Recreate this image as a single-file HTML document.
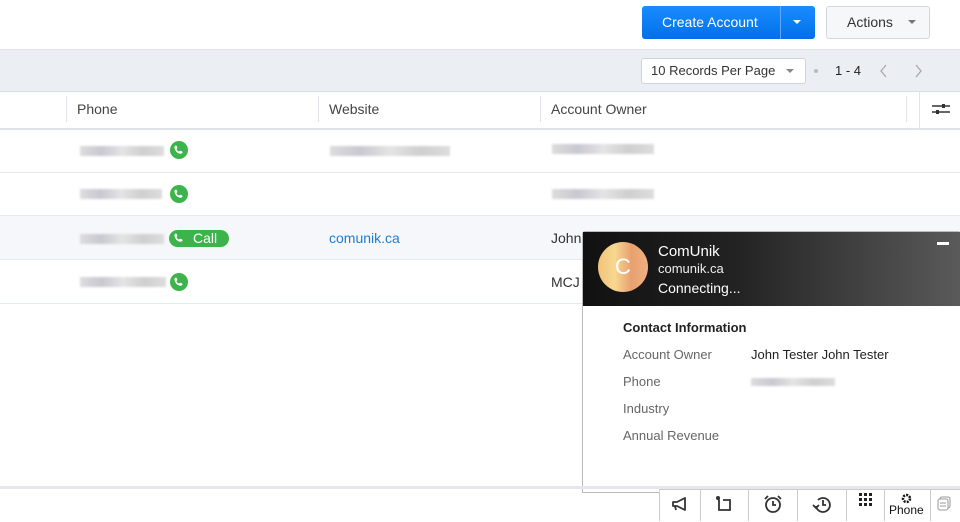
<!DOCTYPE html><html><head><style>
body{margin:0;width:960px;height:521px;overflow:hidden;background:#fff;font-family:"Liberation Sans",sans-serif;font-size:14px;color:#333;position:relative}
.a{position:absolute}
.blur{position:absolute;height:10px;background:linear-gradient(90deg,#ddd,#c8c8d0,#e4e4e4,#cfcfcf,#ddd);filter:blur(1px)}
.ph{position:absolute;width:18px;height:18px;border-radius:9px;background:#3cb44b}
.row{position:absolute;left:0;width:960px;border-bottom:1px solid #e6e9ee;height:43px}
.lbl{position:absolute;left:623px;color:#666}
.ic{position:absolute;top:494px}
</style></head><body>
<svg width="0" height="0" style="position:absolute"><defs><symbol id="p" viewBox="0 0 18 18"><path d="M6 4.5c.6 0 1.4 2 1.4 2.4 0 .5-.9.9-.8 1.3.3 1 1.3 2 2.3 2.3.4.1.8-.8 1.3-.8.4 0 2.4.8 2.4 1.4 0 .9-1 1.7-1.9 1.7C7.7 12.8 4.9 9.9 4.4 6.5c0-.9.7-2 1.6-2z" fill="#fff"/></symbol></defs></svg>
<div class="a" style="left:642px;top:6px;width:173px;height:33px;border-radius:3px;background:linear-gradient(#1a8cff,#0070e8)"></div>
<div class="a" style="left:662px;top:14px;color:#fff;font-size:14px">Create Account</div>
<div class="a" style="left:780px;top:6px;width:1px;height:33px;background:#5aa8ff"></div>
<div class="a" style="left:793px;top:20px;border:4px solid transparent;border-top-color:#fff"></div>
<div class="a" style="left:826px;top:6px;width:102px;height:31px;border:1px solid #d3d7de;border-radius:3px;background:#f6f7f9"></div>
<div class="a" style="left:847px;top:14px;color:#333">Actions</div>
<div class="a" style="left:908px;top:20px;border:4px solid transparent;border-top-color:#777"></div>
<div class="a" style="left:0;top:49px;width:960px;height:41px;background:#ebeef2;border-top:1px solid #e2e5ea;border-bottom:1px solid #d9dee6"></div>
<div class="a" style="left:641px;top:58px;width:163px;height:24px;border:1px solid #cfd4db;border-radius:3px;background:#fff"></div>
<div class="a" style="left:651px;top:63px;font-size:13px">10 Records Per Page</div>
<div class="a" style="left:786px;top:69px;border:4px solid transparent;border-top-color:#888"></div>
<div class="a" style="left:814px;top:69px;width:4px;height:4px;border-radius:2px;background:#bbb"></div>
<div class="a" style="left:835px;top:63px;font-size:13px;color:#222">1 - 4</div>
<svg class="a" style="left:879px;top:63px" width="10" height="16"><path d="M7 2L2 8l5 6" stroke="#aaa" fill="none" stroke-width="1.3"/></svg>
<svg class="a" style="left:913px;top:63px" width="10" height="16"><path d="M3 2l5 6-5 6" stroke="#aaa" fill="none" stroke-width="1.3"/></svg>
<div class="a" style="left:0;top:128px;width:960px;height:2px;background:#dfe3e8"></div>
<div class="a" style="left:66px;top:96px;width:1px;height:26px;background:#e0e3e8"></div>
<div class="a" style="left:318px;top:96px;width:1px;height:26px;background:#e0e3e8"></div>
<div class="a" style="left:540px;top:96px;width:1px;height:26px;background:#e0e3e8"></div>
<div class="a" style="left:906px;top:96px;width:1px;height:26px;background:#e0e3e8"></div>
<div class="a" style="left:919px;top:91px;width:1px;height:38px;background:#e0e3e8"></div>
<div class="a" style="left:77px;top:101px;color:#444">Phone</div>
<div class="a" style="left:329px;top:101px;color:#444">Website</div>
<div class="a" style="left:551px;top:101px;color:#444">Account Owner</div>
<svg class="a" style="left:930px;top:101px" width="22" height="16"><path d="M2 5h18M2 11h18" stroke="#333" stroke-width="1.5"/><rect x="12" y="3" width="3" height="4" fill="#333"/><rect x="6" y="9" width="3" height="4" fill="#333"/></svg>
<div class="row" style="top:129px"></div>
<div class="row" style="top:172px"></div>
<div class="row" style="top:216px;background:#f5f7fa"></div>
<div class="row" style="top:260px"></div>
<div class="blur" style="left:80px;top:146px;width:84px"></div><svg class="ph" style="left:170px;top:141px"><use href="#p"/></svg>
<div class="blur" style="left:330px;top:146px;width:120px"></div><div class="blur" style="left:552px;top:144px;width:102px"></div>
<div class="blur" style="left:80px;top:189px;width:82px"></div><svg class="ph" style="left:170px;top:185px"><use href="#p"/></svg>
<div class="blur" style="left:552px;top:189px;width:102px"></div>
<div class="blur" style="left:80px;top:234px;width:84px"></div>
<div class="a" style="left:169px;top:230px;width:60px;height:17px;border-radius:9px;background:#3cb44b;color:#fff;font-size:14px;line-height:17px"><svg style="position:absolute;left:1px;top:-1px" width="18" height="18"><use href="#p"/></svg><span style="margin-left:24px">Call</span></div>
<div class="a" style="left:329px;top:230px;color:#1a7fd4">comunik.ca</div>
<div class="a" style="left:551px;top:230px">John</div>
<div class="blur" style="left:80px;top:277px;width:86px"></div><svg class="ph" style="left:170px;top:273px"><use href="#p"/></svg>
<div class="a" style="left:551px;top:274px">MCJ</div>
<div class="a" style="left:582px;top:231px;width:377px;height:260px;border:1px solid #bbb;background:#fff;border-radius:3px 3px 0 0"></div>
<div class="a" style="left:583px;top:232px;width:377px;height:74px;background:linear-gradient(90deg,#111,#222 40%,#5a5a5a)"></div>
<div class="a" style="left:598px;top:242px;width:50px;height:50px;border-radius:25px;background:linear-gradient(90deg,#f2c27a,#f7d890,#e8a070,#f0b080);color:#fff;font-size:22px;text-align:center;line-height:50px">C</div>
<div class="a" style="left:658px;top:243px;color:#fff;font-size:15px">ComUnik</div>
<div class="a" style="left:658px;top:261px;color:#eee;font-size:13px">comunik.ca</div>
<div class="a" style="left:658px;top:280px;color:#fff;font-size:14px">Connecting...</div>
<div class="a" style="left:937px;top:242px;width:12px;height:3px;background:#fff"></div>
<div class="a" style="left:623px;top:320px;font-weight:bold;font-size:13px;color:#222">Contact Information</div>
<div class="lbl" style="top:347px;font-size:13px">Account Owner</div>
<div class="a" style="left:751px;top:347px;font-size:13px;color:#222">John Tester John Tester</div>
<div class="lbl" style="top:374px;font-size:13px">Phone</div>
<div class="blur" style="left:751px;top:378px;width:84px;height:8px"></div>
<div class="lbl" style="top:401px;font-size:13px">Industry</div>
<div class="lbl" style="top:428px;font-size:13px">Annual Revenue</div>
<div class="a" style="left:0;top:486px;width:960px;height:3px;background:#e5e7ea"></div>
<div class="a" style="left:659px;top:489px;width:301px;height:32px;border-top:1px solid #ccc;background:#fff"></div>
<div class="a" style="left:659px;top:489px;width:1px;height:32px;background:#ccc"></div>
<div class="a" style="left:700px;top:489px;width:1px;height:32px;background:#ccc"></div>
<div class="a" style="left:748px;top:489px;width:1px;height:32px;background:#ccc"></div>
<div class="a" style="left:797px;top:489px;width:1px;height:32px;background:#ccc"></div>
<div class="a" style="left:846px;top:489px;width:1px;height:32px;background:#ccc"></div>
<div class="a" style="left:884px;top:489px;width:1px;height:32px;background:#ccc"></div>
<div class="a" style="left:930px;top:489px;width:1px;height:32px;background:#ccc"></div>
<svg class="ic" style="left:670px" width="20" height="20"><path d="M3 8h4l8-4v12l-8-4H3z M5 12l1 4" stroke="#333" stroke-width="1.8" fill="none" stroke-linejoin="round"/></svg>
<svg class="ic" style="left:714px" width="20" height="20"><path d="M3 4l2 2v10h11V6h-7" stroke="#333" stroke-width="1.8" fill="none"/><circle cx="4" cy="4" r="2" fill="#333"/></svg>
<svg class="ic" style="left:763px" width="20" height="20"><circle cx="10" cy="11" r="7" stroke="#333" stroke-width="1.8" fill="none"/><path d="M10 7v4h3M2 5l3-3M18 5l-3-3" stroke="#333" stroke-width="1.8" fill="none"/></svg>
<svg class="ic" style="left:812px" width="20" height="20"><path d="M4 12a7 7 0 1 0 2-6" stroke="#333" stroke-width="1.8" fill="none"/><path d="M11 6v5h3M1 11l3 3 3-3" stroke="#333" stroke-width="1.8" fill="none"/></svg>
<svg class="a" style="left:858px;top:492px" width="16" height="18"><g fill="#222"><rect x="1" y="1" width="3" height="3"/><rect x="6" y="1" width="3" height="3"/><rect x="11" y="1" width="3" height="3"/><rect x="1" y="6" width="3" height="3"/><rect x="6" y="6" width="3" height="3"/><rect x="11" y="6" width="3" height="3"/><rect x="1" y="11" width="3" height="3"/><rect x="6" y="11" width="3" height="3"/><rect x="11" y="11" width="3" height="3"/></g></svg>
<svg class="a" style="left:900px;top:492px" width="13" height="13"><circle cx="6.5" cy="6.5" r="3.5" stroke="#111" stroke-width="2.5" fill="none" stroke-dasharray="2 1.2"/><circle cx="6.5" cy="6.5" r="1.3" fill="#fff"/></svg>
<div class="a" style="left:889px;top:503px;font-size:12px;color:#111">Phone</div>
<svg class="a" style="left:937px;top:495px" width="16" height="16"><rect x="3" y="2" width="10" height="11" rx="2" stroke="#999" fill="none"/><rect x="1" y="4" width="10" height="11" rx="2" stroke="#999" fill="#fff"/><path d="M3 8h6M3 11h6" stroke="#999"/></svg>
</body></html>
